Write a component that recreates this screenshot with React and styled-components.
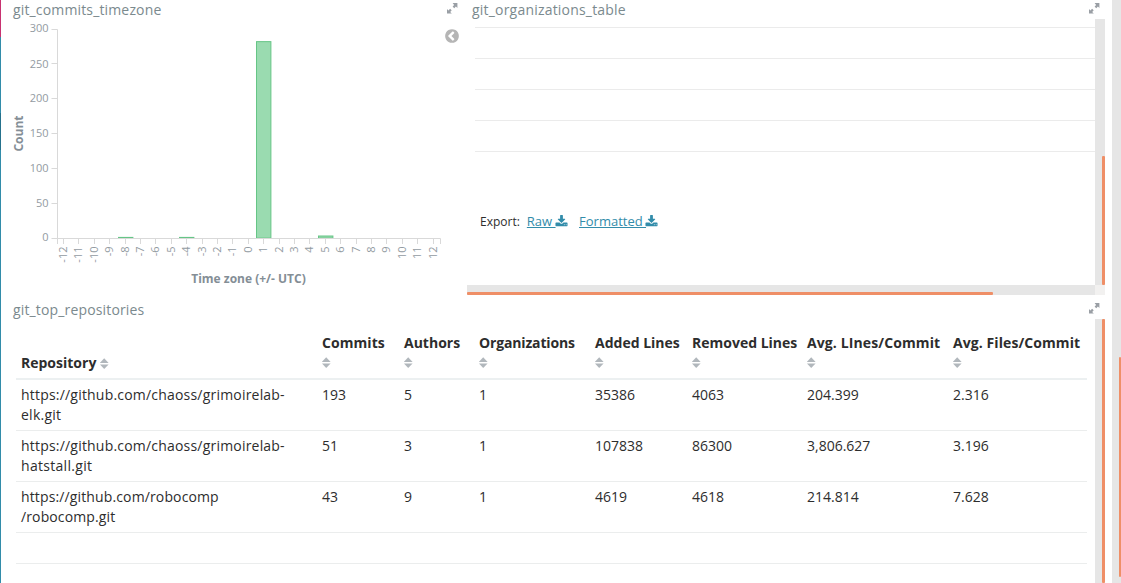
import React from "react";
import styled, { createGlobalStyle } from "styled-components";

const GlobalStyle = createGlobalStyle`
  * { box-sizing: border-box; }
  body {
    margin: 0;
    background: #fff;
    color: #2d2d2d;
    font: 14px/20px "Open Sans", "Liberation Sans", sans-serif;
    overflow: hidden;
  }
`;

const Dashboard = styled.div`
  display: grid;
  grid-template-columns: 1px 1111px 9px;
  width: 1121px;
  height: 583px;
  overflow: hidden;
`;

const NavEdge = styled.div`
  display: flex;
  flex-direction: column;
`;

const NavStripe = styled.div`
  flex: ${(p) => (p.$height ? `0 0 ${p.$height}px` : "1")};
  background: ${(p) => p.$color};
`;

const Panels = styled.main`
  display: grid;
  grid-template-columns: 459px 638px;
  grid-template-rows: 295px 283px;
  column-gap: 7px;
  row-gap: 5px;
  margin-right: 7px;
`;

const Panel = styled.section`
  display: flex;
  flex-direction: column;
  min-width: 0;
  height: ${(p) => p.$height}px;
  grid-column: ${(p) => (p.$wide ? "1 / -1" : "auto")};
`;

const PanelHead = styled.header`
  display: flex;
  justify-content: space-between;
  align-items: flex-start;
  flex: none;
  height: 19px;
  padding: 0 ${(p) => p.$right}px 0 ${(p) => p.$left}px;
`;

const PanelTitle = styled.h2`
  margin: 0;
  font-size: 14px;
  line-height: 20px;
  font-weight: 400;
  letter-spacing: ${(p) => p.$tracking || 0.15}px;
  color: #7b8a8e;
  white-space: nowrap;
`;

const ExpandSvg = styled.svg`
  flex: none;
  width: 11px;
  height: 11px;
  margin-top: 3px;
`;

const PanelBody = styled.div`
  display: flex;
  justify-content: space-between;
  flex: 1;
  min-height: 0;
`;

const ChartSvg = styled.svg`
  flex: none;
  width: 441px;
  height: 276px;
  font-family: "Open Sans", sans-serif;
`;

const LegendToggle = styled.button`
  width: 16px;
  height: 16px;
  margin: 9px 0 0 0;
  padding: 0;
  border: 0;
  background: none;
  line-height: 0;
`;

const ScrollArea = styled.div`
  display: grid;
  grid-template-columns: minmax(0, 1fr) 10px;
  grid-template-rows: minmax(0, 1fr) ${(p) => (p.$both ? "10px" : "")};
  flex: 1;
  min-height: 0;
`;

const Viewport = styled.div`
  overflow: hidden;
`;

const Track = styled.div`
  display: flex;
  background: #e6e6e6;
  ${(p) =>
    p.$horizontal
      ? "align-items: flex-end;"
      : `justify-content: flex-end; padding-top: ${p.$start || 0}px;`}
`;

const Thumb = styled.div`
  width: ${(p) => p.$width}px;
  height: ${(p) => p.$height}px;
  border-radius: 1px;
  background: #ef8f67;
`;

const ScrollCorner = styled.div`
  background: #f2f1f0;
`;

const EmptyRows = styled.div`
  padding: 8px 0 0 8px;
`;

const EmptyRow = styled.div`
  height: 31px;
  border-top: 1px solid #ebebeb;
`;

const ExportBar = styled.div`
  display: flex;
  align-items: baseline;
  margin-top: 29px;
  padding-left: 5px;
  height: 20px;
  font-size: 12px;
`;

const ExportLink = styled.a`
  display: inline-flex;
  align-items: center;
  margin-left: ${(p) => p.$gap}px;
  font-size: 13px;
  color: #328caa;
  white-space: pre;

  span { text-decoration: underline; }
  svg { width: 13px; height: 13px; margin-left: -1px; }
`;

const Table = styled.table`
  width: 1071px;
  margin: 9px 0 0 15px;
  table-layout: fixed;
  border-collapse: separate;
  border-spacing: 0;
`;

const HeadCell = styled.th`
  height: 52px;
  padding: 5px 0 5px 5px;
  border-bottom: 2px solid #ecf0f1;
  text-align: left;
  vertical-align: bottom;
  font-weight: 700;
  letter-spacing: ${(p) => p.$tracking || 0}px;
  white-space: nowrap;
`;

const Cell = styled.td`
  height: ${(p) => (p.$empty ? 31 : 51)}px;
  padding: 5px 0 5px 5px;
  border-bottom: 1px solid #ebeded;
  vertical-align: top;
  white-space: nowrap;
`;

const UrlLine = styled.span`
  display: block;
  letter-spacing: ${(p) => p.$tracking}px;
`;

const SortSvg = styled.svg`
  display: ${(p) => (p.$inline ? "inline-block" : "block")};
  width: 9px;
  height: 11px;
  margin: ${(p) => (p.$inline ? "0 0 0 3.5px" : "4px 0 5px")};
  vertical-align: -1px;
`;

function ExpandIcon() {
  return (
    <ExpandSvg viewBox="0 0 11 11" fill="#9a9fa5">
      <path d="M5.6 0H10.4V4.9L8.9 3.5L7.2 5.2L5.6 3.6L7.1 2Z" />
      <path d="M0 6L1.4 7.4L3.1 5.7L4.7 7.3L3.2 9L4.8 10.6H0Z" />
    </ExpandSvg>
  );
}

function SortIcon({ inline }) {
  return (
    <SortSvg $inline={inline} viewBox="0 0 9 11" fill="#b1b7bc">
      <path d="M4.2 0.3L8.6 5H-.2Z" />
      <path d="M-.2 6.4H8.6L4.2 11Z" />
    </SortSvg>
  );
}

function DownloadIcon() {
  return (
    <svg viewBox="0 0 1792 1792" fill="#328caa">
      <path d="M1344 1344q0-26-19-45t-45-19-45 19-19 45 19 45 45 19 45-19 19-45zm256 0q0-26-19-45t-45-19-45 19-19 45 19 45 45 19 45-19 19-45zm128-224v320q0 40-28 68t-68 28h-1472q-40 0-68-28t-28-68v-320q0-40 28-68t68-28h465l135 136q58 56 136 56t136-56l136-136h464q40 0 68 28t28 68zm-325-569q17 41-14 70l-448 448q-18 19-45 19t-45-19l-448-448q-31-29-14-70 17-39 59-39h256v-448q0-26 19-45t45-19h256q26 0 45 19t19 45v448h256q42 0 59 39z" />
    </svg>
  );
}

function CollapseIcon() {
  return (
    <svg width="16" height="16" viewBox="0 0 1792 1792" fill="#b5b5b5">
      <path d="M1037 1395l102-102q19-19 19-45t-19-45l-307-307 307-307q19-19 19-45t-19-45l-102-102q-19-19-45-19t-45 19l-454 454q-19 19-19 45t19 45l454 454q19 19 45 19t45-19zm627-499q0 209-103 385.5t-279.5 279.5-385.5 103-385.5-103-279.5-279.5-103-385.5 103-385.5 279.5-279.5 385.5-103 385.5 103 279.5 279.5 103 385.5z" />
    </svg>
  );
}

const COUNT_TICKS = [0, 50, 100, 150, 200, 250, 300];
const ZONES = Array.from({ length: 25 }, (_, i) => i - 12);
const BARS = [
  { zone: -8, count: 1 },
  { zone: -4, count: 1 },
  { zone: 1, count: 282 },
  { zone: 5, count: 3 },
];

const AXIS_LEFT = 56.5;
const AXIS_RIGHT = 439.5;
const AXIS_BOTTOM = 219.5;
const countY = (n) => Math.floor(219 - (n * 209) / 300) + 0.5;
const labelY = (n) => Math.min(222, Math.ceil(222.3 - (n * 209) / 300));
const zoneX = (z) => Math.floor(62.4 + (z + 12) * 15.4) + 0.5;

function TimezoneChart() {
  return (
    <ChartSvg viewBox="0 0 441 276">
      {BARS.map(({ zone, count }) => {
        const height = Math.max(0.7, (count * 209) / 300);
        return (
          <rect
            key={zone}
            x={zoneX(zone) - 7}
            y={AXIS_BOTTOM - height - 0.4}
            width="14.4"
            height={height}
            fill="#9adbb0"
            stroke="#66c586"
          />
        );
      })}
      <g stroke="#d9d9d9" fill="none">
        <path d={`M50.5 10.5H${AXIS_LEFT}V${AXIS_BOTTOM}H50.5`} />
        {COUNT_TICKS.slice(1, -1).map((n) => (
          <path key={n} d={`M50.5 ${countY(n)}H${AXIS_LEFT}`} />
        ))}
        <path d={`M${AXIS_LEFT} 225V${AXIS_BOTTOM}H${AXIS_RIGHT}V225`} />
        {ZONES.map((z) => (
          <path key={z} d={`M${zoneX(z)} ${AXIS_BOTTOM}V225`} />
        ))}
      </g>
      <g fill="#939ba2" fontSize="11">
        {COUNT_TICKS.map((n) => (
          <text key={n} x="47.5" y={n === 300 ? 13 : labelY(n)} textAnchor="end">{n}</text>
        ))}
        {ZONES.map((z) => (
          <text
            key={z}
            transform={`translate(${zoneX(z) + 3.2} 227.5) rotate(-90)`}
            textAnchor="end"
          >
            {z}
          </text>
        ))}
      </g>
      <g fill="#848e96" fontSize="12" fontWeight="700" textAnchor="middle">
        <text transform="translate(22 114.5) rotate(-90)">Count</text>
        <text x="247.5" y="264">Time zone (+/- UTC)</text>
      </g>
    </ChartSvg>
  );
}

const COLUMNS = [
  { label: "Repository", width: 301 },
  { label: "Commits", width: 82, tracking: 0.06 },
  { label: "Authors", width: 75 },
  { label: "Organizations", width: 116, tracking: -0.15 },
  { label: "Added Lines", width: 97 },
  { label: "Removed Lines", width: 115 },
  { label: "Avg. LInes/Commit", width: 146, tracking: 0.11 },
  { label: "Avg. Files/Commit", width: 139, tracking: 0.08 },
];

const ROWS = [
  {
    url: [["https://github.com/chaoss/grimoirelab-", 0.2], ["elk.git", 0.25]],
    values: ["193", "5", "1", "35386", "4063", "204.399", "2.316"],
  },
  {
    url: [["https://github.com/chaoss/grimoirelab-", 0.2], ["hatstall.git", 0.3]],
    values: ["51", "3", "1", "107838", "86300", "3,806.627", "3.196"],
  },
  {
    url: [["https://github.com/robocomp", 0.13], ["/robocomp.git", 0.12]],
    values: ["43", "9", "1", "4619", "4618", "214.814", "7.628"],
  },
];

function RepositoriesTable() {
  return (
    <Table>
      <colgroup>
        {COLUMNS.map((c) => <col key={c.label} width={c.width} />)}
      </colgroup>
      <thead>
        <tr>
          {COLUMNS.map((c, i) => (
            <HeadCell key={c.label} $tracking={c.tracking}>
              {c.label}
              <SortIcon inline={i === 0} />
            </HeadCell>
          ))}
        </tr>
      </thead>
      <tbody>
        {ROWS.map(({ url, values }, r) => (
          <tr key={r}>
            <Cell>
              {url.map(([text, tracking]) => (
                <UrlLine key={text} $tracking={tracking}>{text}</UrlLine>
              ))}
            </Cell>
            {values.map((v, i) => <Cell key={i}>{v}</Cell>)}
          </tr>
        ))}
        <tr><Cell $empty colSpan={8} /></tr>
      </tbody>
    </Table>
  );
}

export default function App() {
  return (
    <>
      <GlobalStyle />
      <Dashboard>
        <NavEdge>
          <NavStripe $height={37} $color="#c83270" />
          <NavStripe $height={76} $color="#328caa" />
          <NavStripe $height={37} $color="#25718c" />
          <NavStripe $color="#328caa" />
        </NavEdge>
        <Panels>
          <Panel $height={295}>
            <PanelHead $left={12} $right={2}>
              <PanelTitle>git_commits_timezone</PanelTitle>
              <ExpandIcon />
            </PanelHead>
            <PanelBody>
              <TimezoneChart />
              <LegendToggle aria-label="Toggle legend"><CollapseIcon /></LegendToggle>
            </PanelBody>
          </Panel>
          <Panel $height={295}>
            <PanelHead $left={5} $right={5}>
              <PanelTitle $tracking={0.2}>git_organizations_table</PanelTitle>
              <ExpandIcon />
            </PanelHead>
            <ScrollArea $both>
              <Viewport>
                <EmptyRows>
                  {[0, 1, 2, 3, 4].map((n) => <EmptyRow key={n} />)}
                  <ExportBar>
                    Export:
                    <ExportLink $gap={7}><span>Raw </span><DownloadIcon /></ExportLink>
                    <ExportLink $gap={11.5}><span>Formatted </span><DownloadIcon /></ExportLink>
                  </ExportBar>
                </EmptyRows>
              </Viewport>
              <Track $start={137}><Thumb $width={3} $height={129} /></Track>
              <Track $horizontal><Thumb $width={526} $height={3} /></Track>
              <ScrollCorner />
            </ScrollArea>
          </Panel>
          <Panel $wide $height={283}>
            <PanelHead $left={12} $right={5}>
              <PanelTitle>git_top_repositories</PanelTitle>
              <ExpandIcon />
            </PanelHead>
            <ScrollArea>
              <Viewport><RepositoriesTable /></Viewport>
              <Track><Thumb $width={3} $height={264} /></Track>
            </ScrollArea>
          </Panel>
        </Panels>
        <Track $start={357}><Thumb $width={2} $height={220} /></Track>
      </Dashboard>
    </>
  );
}
